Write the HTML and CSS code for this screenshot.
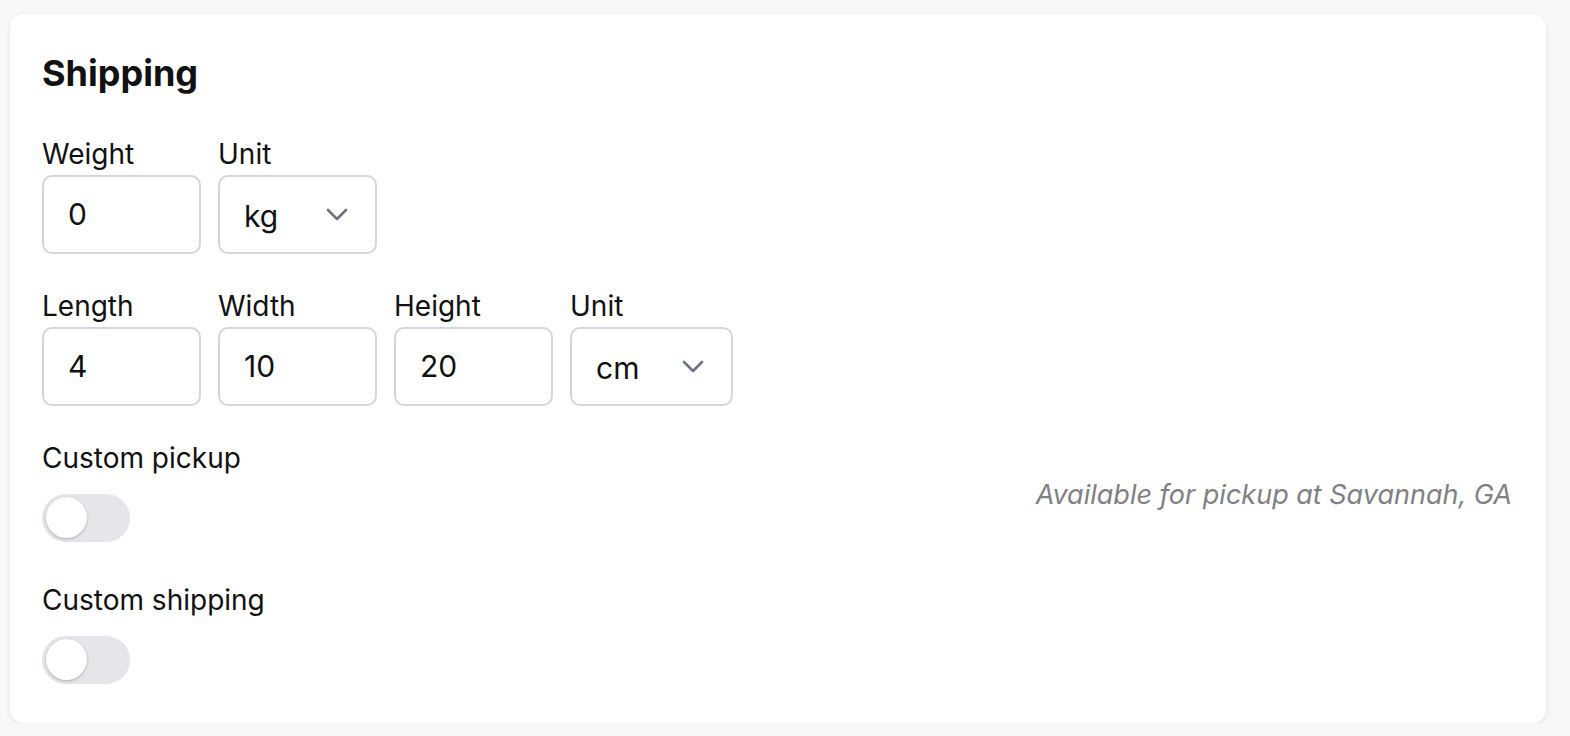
FILE: index.html
```html
<!DOCTYPE html>
<html lang="en">
<head>
  <meta charset="UTF-8">
  <title>Shipping</title>
  <link rel="stylesheet" href="styles.css">
</head>
<body>
  <div class="card">
    <h2>Shipping</h2>

    <div class="row">
      <div class="field">
        <label for="weight">Weight</label>
        <input type="text" id="weight" value="0">
      </div>
      <div class="field">
        <label for="weight-unit">Unit</label>
        <div class="select-wrap">
          <select id="weight-unit">
            <option>kg</option>
            <option>lb</option>
          </select>
          <svg class="chevron" width="22" height="13" viewBox="0 0 22 13"><path d="M2 2l9 9 9-9" fill="none" stroke="#6b7280" stroke-width="2.6" stroke-linecap="round" stroke-linejoin="round"/></svg>
        </div>
      </div>
    </div>

    <div class="row">
      <div class="field">
        <label for="length">Length</label>
        <input type="text" id="length" value="4">
      </div>
      <div class="field">
        <label for="width">Width</label>
        <input type="text" id="width" value="10">
      </div>
      <div class="field">
        <label for="height">Height</label>
        <input type="text" id="height" value="20">
      </div>
      <div class="field">
        <label for="size-unit">Unit</label>
        <div class="select-wrap">
          <select id="size-unit">
            <option>cm</option>
            <option>in</option>
          </select>
          <svg class="chevron" width="22" height="13" viewBox="0 0 22 13"><path d="M2 2l9 9 9-9" fill="none" stroke="#6b7280" stroke-width="2.6" stroke-linecap="round" stroke-linejoin="round"/></svg>
        </div>
      </div>
    </div>

    <div class="toggle-row">
      <div class="toggle-field">
        <span class="toggle-label">Custom pickup</span>
        <div class="toggle"><span class="knob"></span></div>
      </div>
      <p class="note">Available for pickup at Savannah, GA</p>
    </div>

    <div class="toggle-row last">
      <div class="toggle-field">
        <span class="toggle-label">Custom shipping</span>
        <div class="toggle"><span class="knob"></span></div>
      </div>
    </div>
  </div>
</body>
</html>
```

FILE: styles.css
```css
body {
  margin: 0;
  padding: 14px 24px 0 10px;
  font-family: 'Inter', sans-serif;
  background-color: #f7f8fa;
  color: #111;
}

.card {
  background-color: #ffffff;
  border-radius: 14px;
  box-shadow: 0 2px 6px rgba(0, 0, 0, 0.08);
  padding: 38px 34px 39px 32px;
}

h2 {
  margin: 0 0 41px;
  font-size: 36px;
  font-weight: 700;
  line-height: 1.21;
}

.row {
  display: flex;
  gap: 17px;
  margin-bottom: 35px;
}

.field {
  display: flex;
  flex-direction: column;
  gap: 4px;
}

label, .toggle-label {
  font-size: 28px;
  line-height: 34px;
}

input, select {
  box-sizing: border-box;
  width: 159px;
  height: 79px;
  padding: 0 24px;
  border: 2px solid #d4d6db;
  border-radius: 10px;
  font-family: inherit;
  font-size: 30px;
  color: #111;
  background-color: #fff;
  outline: none;
}

.select-wrap {
  position: relative;
}

select {
  appearance: none;
  -webkit-appearance: none;
  padding-top: 4px;
}

.row:nth-of-type(2) select {
  width: 163px;
}

.chevron {
  position: absolute;
  right: 29px;
  top: 33px;
  pointer-events: none;
}

.toggle-row {
  display: flex;
  justify-content: space-between;
  align-items: center;
  margin-bottom: 41px;
}

.toggle-row.last {
  margin-bottom: 0;
}

.toggle-field {
  display: flex;
  flex-direction: column;
  gap: 19px;
}

.toggle {
  width: 88px;
  height: 48px;
  border-radius: 24px;
  background-color: #e5e6ea;
  display: flex;
  align-items: center;
  padding: 0 4px;
  box-sizing: border-box;
}

.knob {
  width: 41px;
  height: 41px;
  border-radius: 50%;
  background-color: #fff;
  box-shadow: 0 1px 3px rgba(0, 0, 0, 0.25);
}

.note {
  margin: 0 0 0 0;
  padding-top: 6px;
  font-size: 27px;
  font-style: italic;
  color: #808084;
}
```
